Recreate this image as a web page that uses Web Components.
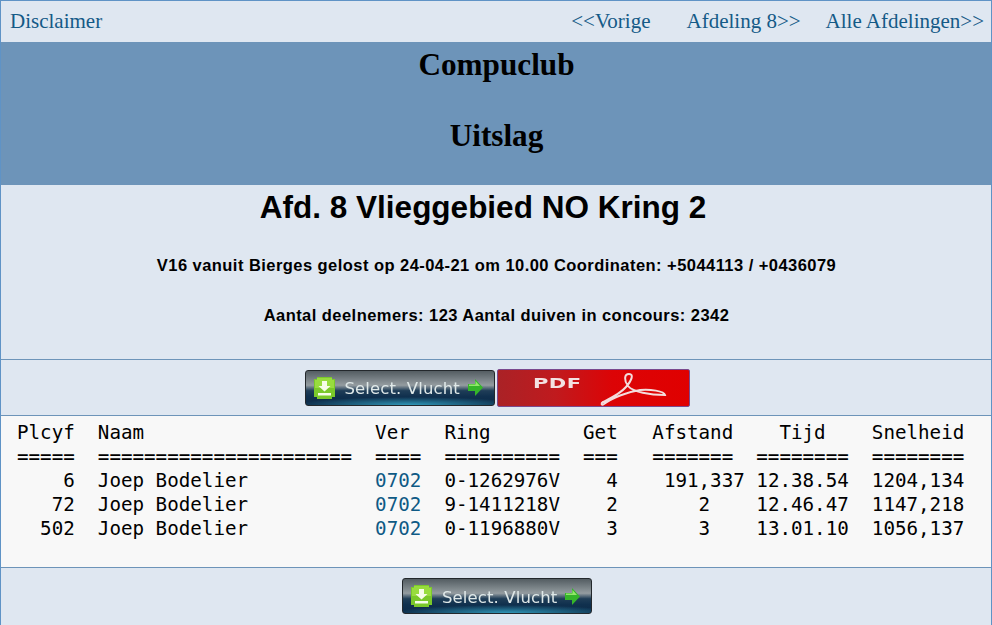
<!DOCTYPE html>
<html lang="nl"><head><meta charset="utf-8"><title>Uitslag</title>
<style>
html,body{margin:0;padding:0;background:#dfe7f1}
body{width:992px;height:625px;overflow:hidden}
</style></head>
<body>
<club-page>
  <club-nav></club-nav>
  <club-banner><h-line>Compuclub</h-line><h-line>Uitslag</h-line></club-banner>
  <club-info></club-info>
  <btn-row kind="top"><select-btn></select-btn><pdf-btn></pdf-btn></btn-row>
  <result-table></result-table>
  <btn-row kind="bottom"><select-btn></select-btn></btn-row>
</club-page>
<script>
function def(name,html){
  customElements.define(name,class extends HTMLElement{
    constructor(){super();this.attachShadow({mode:'open'}).innerHTML=html;}
  });
}
def('club-page',`<style>:host{display:flex;flex-direction:column;box-sizing:border-box;width:992px;height:625px;border:1px solid #5f93c6;border-bottom:0;overflow:hidden}</style><slot></slot>`);
def('club-nav',`<style>
:host{display:flex;align-items:center;height:41px;box-sizing:border-box;padding:0 7px 0 9px;background:#dfe7f1;font:21px "Liberation Serif",serif;color:#145a87;flex:none}
span{display:block}.sp{flex:1}
.v{margin-right:36px}.a{margin-right:25px}
</style><span>Disclaimer</span><span class="sp"></span><span class="v">&lt;&lt;Vorige</span><span class="a">Afdeling 8&gt;&gt;</span><span>Alle Afdelingen&gt;&gt;</span>`);
def('club-banner',`<style>:host{display:flex;flex-direction:column;align-items:center;gap:34px;box-sizing:border-box;height:143px;padding:4px 0 0 1px;background:#6d94b9;flex:none}</style><slot></slot>`);
def('h-line',`<style>:host{display:block;font:bold 31.2px/37px "Liberation Serif",serif;color:#000}</style><slot></slot>`);
def('club-info',`<style>
:host{display:flex;flex-direction:column;align-items:center;box-sizing:border-box;height:175px;background:#dfe7f1;color:#000;font-family:"Liberation Sans",Arial,sans-serif;font-weight:bold;border-bottom:1px solid #6d94b9;flex:none}
.t{font-size:31.5px;line-height:37px;margin:4px 26px 0 0}
.s{font-size:16.5px;line-height:18px;letter-spacing:.45px;margin-left:1px}
.a{margin-top:30px}.b{margin-top:32px}
</style><div class="t">Afd. 8 Vlieggebied NO Kring 2</div><div class="s a">V16 vanuit Bierges gelost op 24-04-21 om 10.00 Coordinaten: +5044113 / +0436079</div><div class="s b">Aantal deelnemers: 123 Aantal duiven in concours: 2342</div>`);
def('btn-row',`<style>
:host{display:flex;justify-content:center;align-items:center;gap:2px;box-sizing:border-box;background:#dfe7f1;flex:none}
:host([kind=top]){height:55px;padding-left:2px}
:host([kind=bottom]){height:56px;padding:0 0 0 2px}
</style><slot></slot>`);
def('select-btn',`<style>
:host{display:flex;align-items:center;box-sizing:border-box;width:190px;height:36px;border:1px solid #23282c;border-radius:3px;background:radial-gradient(60% 8px at 55% 100%,#2f97b8 0,transparent 100%),linear-gradient(#545d62 0,#6a7378 15%,#949ca0 42%,#1f3d57 58%,#10304e 75%,#0c2a47 100%);color:#dfe8e8;font:16.500px "DejaVu Sans",sans-serif;flex:none;overflow:hidden;filter:blur(.35px)}
svg{flex:none;display:block}
.i{margin-left:8px}
.t{margin-left:10px;padding-top:2px;white-space:nowrap;letter-spacing:.12px}
.r{margin-left:8px}
</style><svg class="i" width="21" height="22" viewBox="0 0 21 22"><path d="M3 0H18V2H21V20H18V22H3V20H0V2H3Z" fill="#7ac82a"/><path d="M3 1H18V3H20V11H1V3H3Z" fill="#98dc3e"/><path d="M8 4H13V9H16.500L10.500 14.500L4.500 9H8Z" fill="#f6fce8"/><rect x="4" y="16" width="13" height="2.500" fill="#f6fce8"/></svg><span class="t">Select. Vlucht</span><svg class="r" width="15" height="17" viewBox="0 0 15 17"><path d="M7 0L15 8.500L7 17V12H0V5H7Z" fill="#35b52a"/><path d="M7.500 2L12 7H1V5.500H7.500Z" fill="#92e86a"/></svg>`);
def('pdf-btn',`<style>
:host{display:block;position:relative;box-sizing:border-box;width:193px;height:38px;border:1px solid #7a4a8e;border-radius:2px;background:linear-gradient(90deg,#aa2226 0,#c01a1e 30%,#dc0406 60%,#e00000 100%);flex:none;overflow:hidden}
.t{position:absolute;left:35px;top:5px;font:900 14px/17px "DejaVu Sans","Liberation Sans",sans-serif;color:#f3e2e2;letter-spacing:.3px;transform:scaleX(1.5);transform-origin:left;filter:blur(.25px)}
svg{position:absolute;left:92px;top:-3px;filter:blur(.3px)}
</style><span class="t">PDF</span><svg width="105" height="45" viewBox="590 365 105 45" fill="none"><path d="M603 400C611 396 620 392 626 385C632 378 634 372 629 372C624 372 624 379 628 384C633 390 650 393 665 393C664 389 650 387 640 388C627 390 612 396 604 402C601 404 601 401 603 400Z" stroke="#f4dcdc" stroke-width="2"/></svg>`);
def('result-table',`<style>
:host{display:block;box-sizing:border-box;height:153px;background:#f8f8f8;border-top:1px solid #6d94b9;border-bottom:1px solid #6d94b9;padding:5px 0 0 16px;flex:none}
div{margin:0;white-space:pre;font:19.2px/24px "DejaVu Sans Mono","Liberation Mono",monospace;color:#000;height:24px}
a{color:#0f5a85;text-decoration:none}
</style>
<div>Plcyf  Naam                    Ver   Ring        Get   Afstand    Tijd    Snelheid</div>
<div>=====  ======================  ====  ==========  ===   =======  ========  ========</div>
<div>    6  Joep Bodelier           <a>0702</a>  0-1262976V    4    191,337 12.38.54  1204,134</div>
<div>   72  Joep Bodelier           <a>0702</a>  9-1411218V    2       2    12.46.47  1147,218</div>
<div>  502  Joep Bodelier           <a>0702</a>  0-1196880V    3       3    13.01.10  1056,137</div>`);
</script>
</body></html>
